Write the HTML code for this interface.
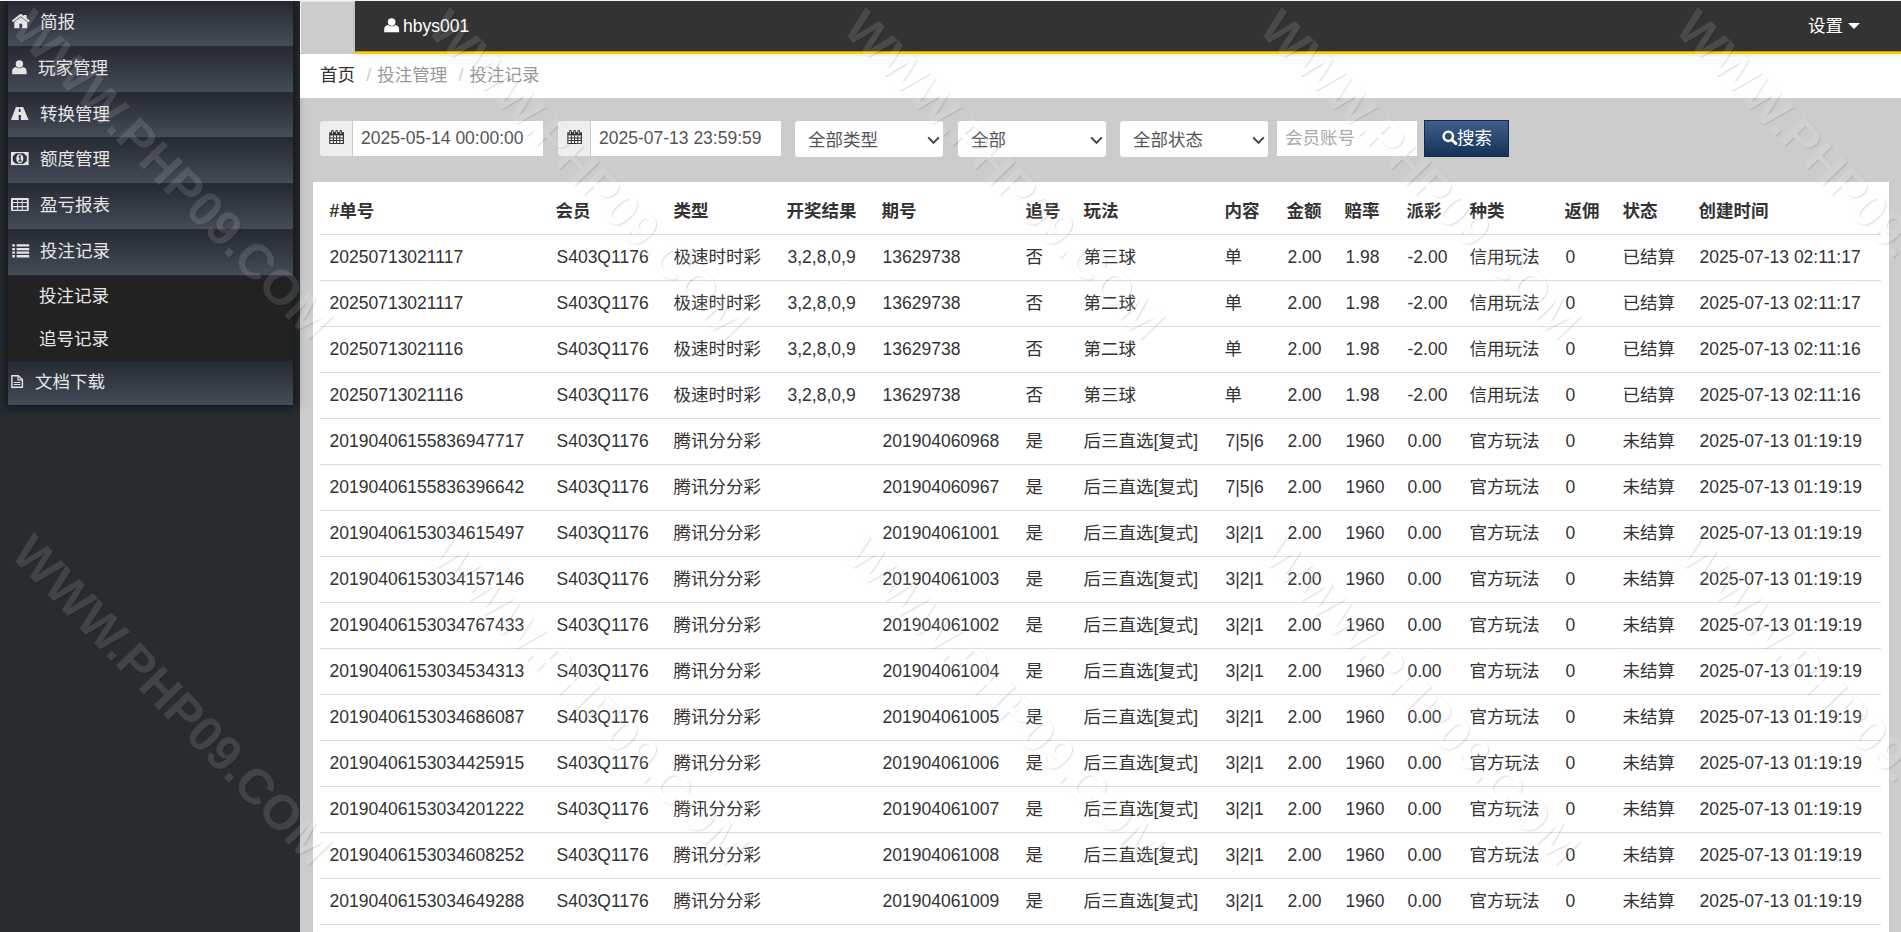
<!DOCTYPE html>
<html lang="zh-CN">
<head>
<meta charset="utf-8">
<title>投注记录</title>
<style>
*{box-sizing:border-box;}
html,body{margin:0;padding:0;}
body{width:1901px;height:932px;overflow:hidden;position:relative;background:#ccc;
  font-family:"Liberation Sans","Noto Sans CJK SC",sans-serif;font-size:17.5px;line-height:25px;color:#333;}
a{color:inherit;text-decoration:none;}
ul{list-style:none;margin:0;padding:0;}
#topline{position:absolute;left:0;top:0;width:1901px;height:1px;background:#f4f4f4;z-index:50;}
/* sidebar */
#side{position:absolute;left:0;top:0;width:300px;height:932px;background:#262c30;}
#menu{position:absolute;left:8px;top:1px;width:285px;box-shadow:0 0 10px 2px rgba(0,0,0,.55);}
#menu li.it{height:46px;border-bottom:1px solid #2b2d2f;background:linear-gradient(#252932,#444c58);color:#e6e6e6;position:relative;}
#menu li.it span{position:absolute;top:9px;line-height:25px;white-space:nowrap;}
#menu li.it svg{position:absolute;}
#menu li.sub{height:85px;background:#222;color:#e6e6e6;position:relative;}
#menu li.sub span{position:absolute;left:31px;line-height:25px;}
/* top bar */
#greybox{position:absolute;left:300px;top:1px;width:55px;height:52px;background:#ccc;border-left:1px solid #f2f2f2;border-top:1px solid #e8e8e8;}
#top{position:absolute;left:355px;top:1px;width:1546px;height:53px;background:#333;border-bottom:2px solid #fc0;color:#fff;z-index:5;box-shadow:0 1px 4px rgba(0,0,0,.12);}
#user{position:absolute;left:48px;top:13px;white-space:nowrap;}
#set{position:absolute;left:1453px;top:13px;white-space:nowrap;}
#caret{position:absolute;left:1493px;top:22px;width:0;height:0;border-left:6px solid transparent;border-right:6px solid transparent;border-top:6px solid #fff;}
#crumb{position:absolute;left:300px;top:54px;width:1601px;height:44px;background:#fff;}
#crumb ol{margin:0;padding:0;list-style:none;position:absolute;left:20px;top:9px;white-space:nowrap;}
#crumb li{display:inline-block;color:#999;}
#crumb li+li:before{content:"/";padding:0 6.25px;color:#ccc;}
#crumb li.h{color:#333;}
/* filter */
.grp{position:absolute;top:120px;height:37px;}
.addon{position:absolute;left:0;top:0;width:33px;height:37px;background:#eee;border:1px solid #ccc;border-right:0;border-radius:4px 0 0 4px;}
.inp{position:absolute;top:0;height:37px;background:#fff;border:1px solid #ccc;padding:0 0 0 8px;line-height:34px;color:#555;white-space:nowrap;}
.sel{position:absolute;top:120px;width:150px;height:38px;background:#fff;border:1px solid #ccc;border-radius:4px;color:#555;line-height:38px;padding-left:13px;}
.sel svg{position:absolute;right:3.5px;top:14.5px;}
#btn{position:absolute;left:1424px;top:120px;width:85px;height:37px;border:1px solid #122b48;background:linear-gradient(#40608a,#12325a);color:#fff;line-height:35px;white-space:nowrap;}
#wm{position:absolute;left:0;top:0;width:1901px;height:932px;overflow:hidden;pointer-events:none;z-index:40;}
#wm span{position:absolute;transform-origin:0 0;transform:rotate(46deg);font:bold 49.1px/1 "Liberation Sans",sans-serif;color:#fff;opacity:.115;white-space:nowrap;text-shadow:1.4px 0 1px #000;}
/* panel */
#panel{position:absolute;left:313px;top:182px;width:1576px;height:760px;background:#fff;}
table{position:absolute;left:6.5px;top:7px;width:1561px;border-collapse:separate;border-spacing:0;table-layout:fixed;}
th,td{height:46px;padding:0 0 0 10px;text-align:left;border-bottom:1px solid #ddd;white-space:nowrap;overflow:visible;font-size:17.5px;line-height:25px;vertical-align:middle;}
th{font-weight:bold;height:46px;}
.c{padding-left:9px;}
</style>
</head>
<body>
<div id="topline"></div>
<div id="side">
<ul id="menu">
<li class="it"><svg style="left:3.5px;top:13px" width="18" height="15" viewBox="0 0 18 15"><path d="M0.4 7.5 L8.7 0.9 L17.2 7.5" fill="none" stroke="#e4e4e4" stroke-width="2.1"/><path d="M11.7 1h2.9v4.2h-2.9z" fill="#e4e4e4"/><path d="M2.3 8 L8.7 3.1 L15.2 8 V14.3 H10.2 V9.8 H7.4 V14.3 H2.3Z" fill="#e4e4e4"/></svg><span style="left:32px">简报</span></li>
<li class="it"><svg style="left:3.5px;top:13px" width="15" height="15" viewBox="0 0 15 15"><circle cx="7.4" cy="4" r="3.7" fill="#e4e4e4"/><path d="M0.2 14.2 V11.2 C0.2 8.4 1.8 7.3 4 6.9 C5 7.9 6.1 8.3 7.4 8.3 C8.7 8.3 9.8 7.9 10.8 6.9 C13 7.3 14.6 8.4 14.6 11.2 V14.2Z" fill="#e4e4e4"/></svg><span style="left:30px">玩家管理</span></li>
<li class="it" style="height:45px"><svg style="left:2.9px;top:14px" width="18" height="14" viewBox="0 0 18 14"><path d="M4.9 0 H12.1 L17.6 13 H0Z" fill="#e4e4e4"/><path d="M8.3 0h0.7v0.7h-0.7zM7.8 1.9h1.8v3.1h-1.8zM7.7 8h2.2v5h-2.2z" fill="#2f3641"/></svg><span style="left:32px">转换管理</span></li>
<li class="it"><svg style="left:2.8px;top:13px" width="18" height="15" viewBox="0 0 18 15"><rect x="0" y="1" width="17.6" height="13.1" fill="#e4e4e4"/><path d="M4.9 2.3H12.5L15.8 5.2V9.9L12.5 12.8H4.9L1.8 9.9V5.2Z" fill="#2b313b"/><ellipse cx="8.8" cy="7.55" rx="3.5" ry="4.4" fill="#e4e4e4"/><path d="M7.6 6 L9.1 4.9 V9.6 M7.4 9.9 H10.6" fill="none" stroke="#2b313b" stroke-width="1.2"/></svg><span style="left:32px">额度管理</span></li>
<li class="it"><svg style="left:2.85px;top:13px" width="18" height="15" viewBox="0 0 18 15"><path fill-rule="evenodd" d="M1 1H16.75Q17.75 1 17.75 2V13.1Q17.75 14.1 16.75 14.1H1Q0 14.1 0 13.1V2Q0 1 1 1ZM1.95 3.06H6.0V4.9H1.95ZM1.95 6.1H6.0V8.9H1.95ZM1.95 10.2H6.0V12.8H1.95ZM6.85 3.06H10.75V4.9H6.85ZM6.85 6.1H10.75V8.9H6.85ZM6.85 10.2H10.75V12.8H6.85ZM11.7 3.06H15.9V4.9H11.7ZM11.7 6.1H15.9V8.9H11.7ZM11.7 10.2H15.9V12.8H11.7Z" fill="#e4e4e4"/></svg><span style="left:32px">盈亏报表</span></li>
<li class="it"><svg style="left:3.5px;top:14px" width="18" height="14" viewBox="0 0 18 14"><path d="M0.3 0.3h2.6v2.3H0.3zM4.6 0.3H17.2v2.3H4.6zM0.3 3.9h2.6v2.3H0.3zM4.6 3.9H17.2v2.3H4.6zM0.3 7.5h2.6v2.3H0.3zM4.6 7.5H17.2v2.3H4.6zM0.3 11.1h2.6v2.3H0.3zM4.6 11.1H17.2v2.3H4.6z" fill="#e4e4e4"/></svg><span style="left:32px">投注记录</span></li>
<li class="sub"><span style="top:8px">投注记录</span><span style="top:51px">追号记录</span></li>
<li class="it" style="height:44px;border-bottom:0"><svg style="left:2.9px;top:14px" width="13" height="13" viewBox="0 0 13 13"><path d="M0.9 0.8 H7.2 L11.4 4.6 V12.2 H0.9Z" fill="none" stroke="#e4e4e4" stroke-width="1.4"/><path d="M7 0.8 V4.8 H11.4" fill="none" stroke="#e4e4e4" stroke-width="1.2"/><path d="M2.8 7.5H9.4M2.8 9.5H9.4" stroke="#e4e4e4" stroke-width="1"/></svg><span style="left:27px">文档下载</span></li>
</ul>
</div>
<div id="greybox"></div>
<div id="top"><svg style="position:absolute;left:29px;top:16.7px" width="15.5" height="15" viewBox="0 0 15 15" preserveAspectRatio="none"><circle cx="7.4" cy="4" r="3.7" fill="#fff"/><path d="M0.2 14.2 V11.2 C0.2 8.4 1.8 7.3 4 6.9 C5 7.9 6.1 8.3 7.4 8.3 C8.7 8.3 9.8 7.9 10.8 6.9 C13 7.3 14.6 8.4 14.6 11.2 V14.2Z" fill="#fff"/></svg><div id="user">hbys001</div><div id="set">设置</div><div id="caret"></div><div style="position:absolute;left:0;bottom:0;width:100%;height:1px;background:#c29e0f"></div></div>
<div id="crumb"><ol><li class="h">首页</li> <li>投注管理</li> <li>投注记录</li></ol></div>

<div class="grp" style="left:319px;width:225px"><div class="addon"><svg style="position:absolute;left:8.6px;top:8.8px" width="15.2" height="14.4" viewBox="0 0 16 16" preserveAspectRatio="none"><path d="M0.9 3.2H15.1V15H0.9Z" fill="#fff" stroke="#333" stroke-width="1.3"/><path d="M0.9 3.2H15.1V6H0.9Z" fill="#333"/><path d="M1 8.9H15M1 11.6H15M4.6 6V15M8 6V15M11.4 6V15" stroke="#333" stroke-width="1.1" fill="none"/><path d="M3.6 1.2V4.6M8 1.2V4.6M12.4 1.2V4.6" stroke="#333" stroke-width="2.6" stroke-linecap="round"/><path d="M3.6 1.8V4M8 1.8V4M12.4 1.8V4" stroke="#eee" stroke-width="0.9" stroke-linecap="round"/></svg></div><div class="inp" style="left:33px;width:192px">2025-05-14 00:00:00</div></div>
<div class="grp" style="left:557px;width:225px"><div class="addon"><svg style="position:absolute;left:8.6px;top:8.8px" width="15.2" height="14.4" viewBox="0 0 16 16" preserveAspectRatio="none"><path d="M0.9 3.2H15.1V15H0.9Z" fill="#fff" stroke="#333" stroke-width="1.3"/><path d="M0.9 3.2H15.1V6H0.9Z" fill="#333"/><path d="M1 8.9H15M1 11.6H15M4.6 6V15M8 6V15M11.4 6V15" stroke="#333" stroke-width="1.1" fill="none"/><path d="M3.6 1.2V4.6M8 1.2V4.6M12.4 1.2V4.6" stroke="#333" stroke-width="2.6" stroke-linecap="round"/><path d="M3.6 1.8V4M8 1.8V4M12.4 1.8V4" stroke="#eee" stroke-width="0.9" stroke-linecap="round"/></svg></div><div class="inp" style="left:33px;width:192px">2025-07-13 23:59:59</div></div>
<div class="sel" style="left:794px">全部类型<svg width="13" height="9" viewBox="0 0 13 9"><path d="M1.2 1.4 L6.5 6.9 L11.8 1.4" fill="none" stroke="#444" stroke-width="2"/></svg></div>
<div class="sel" style="left:957px">全部<svg width="13" height="9" viewBox="0 0 13 9"><path d="M1.2 1.4 L6.5 6.9 L11.8 1.4" fill="none" stroke="#444" stroke-width="2"/></svg></div>
<div class="sel" style="left:1119px">全部状态<svg width="13" height="9" viewBox="0 0 13 9"><path d="M1.2 1.4 L6.5 6.9 L11.8 1.4" fill="none" stroke="#444" stroke-width="2"/></svg></div>
<div class="inp" style="left:1276px;top:120px;width:142px;color:#aaa">会员账号</div>
<div id="btn"><svg style="position:absolute;left:16.5px;top:9.2px" width="16" height="15" viewBox="0 0 16 15"><circle cx="6.3" cy="6.3" r="4.7" fill="none" stroke="#fff" stroke-width="2.4"/><path d="M9.6 9.6 L14 13.6" stroke="#fff" stroke-width="2.8" stroke-linecap="round"/></svg><span style="position:absolute;left:32px;top:0">搜索</span></div>

<div id="panel">
<table id="tb">
<colgroup><col style="width:227px"><col style="width:118px"><col style="width:113px"><col style="width:95px"><col style="width:144px"><col style="width:58px"><col style="width:141px"><col style="width:62px"><col style="width:58px"><col style="width:62px"><col style="width:63px"><col style="width:95px"><col style="width:58px"><col style="width:76px"><col></colgroup>
<thead><tr><th>#单号</th><th class="c">会员</th><th class="c">类型</th><th class="c">开奖结果</th><th class="c">期号</th><th class="c">追号</th><th class="c">玩法</th><th class="c">内容</th><th class="c">金额</th><th class="c">赔率</th><th class="c">派彩</th><th class="c">种类</th><th class="c">返佣</th><th class="c">状态</th><th class="c">创建时间</th></tr></thead>
<tbody id="tbody">
<tr><td>20250713021117</td><td>S403Q1176</td><td class="c">极速时时彩</td><td>3,2,8,0,9</td><td>13629738</td><td class="c">否</td><td class="c">第三球</td><td class="c">单</td><td>2.00</td><td>1.98</td><td>-2.00</td><td class="c">信用玩法</td><td>0</td><td class="c">已结算</td><td>2025-07-13 02:11:17</td></tr>
<tr><td>20250713021117</td><td>S403Q1176</td><td class="c">极速时时彩</td><td>3,2,8,0,9</td><td>13629738</td><td class="c">否</td><td class="c">第二球</td><td class="c">单</td><td>2.00</td><td>1.98</td><td>-2.00</td><td class="c">信用玩法</td><td>0</td><td class="c">已结算</td><td>2025-07-13 02:11:17</td></tr>
<tr><td>20250713021116</td><td>S403Q1176</td><td class="c">极速时时彩</td><td>3,2,8,0,9</td><td>13629738</td><td class="c">否</td><td class="c">第二球</td><td class="c">单</td><td>2.00</td><td>1.98</td><td>-2.00</td><td class="c">信用玩法</td><td>0</td><td class="c">已结算</td><td>2025-07-13 02:11:16</td></tr>
<tr><td>20250713021116</td><td>S403Q1176</td><td class="c">极速时时彩</td><td>3,2,8,0,9</td><td>13629738</td><td class="c">否</td><td class="c">第三球</td><td class="c">单</td><td>2.00</td><td>1.98</td><td>-2.00</td><td class="c">信用玩法</td><td>0</td><td class="c">已结算</td><td>2025-07-13 02:11:16</td></tr>
<tr><td>20190406155836947717</td><td>S403Q1176</td><td class="c">腾讯分分彩</td><td></td><td>201904060968</td><td class="c">是</td><td class="c">后三直选[复式]</td><td>7|5|6</td><td>2.00</td><td>1960</td><td>0.00</td><td class="c">官方玩法</td><td>0</td><td class="c">未结算</td><td>2025-07-13 01:19:19</td></tr>
<tr><td>20190406155836396642</td><td>S403Q1176</td><td class="c">腾讯分分彩</td><td></td><td>201904060967</td><td class="c">是</td><td class="c">后三直选[复式]</td><td>7|5|6</td><td>2.00</td><td>1960</td><td>0.00</td><td class="c">官方玩法</td><td>0</td><td class="c">未结算</td><td>2025-07-13 01:19:19</td></tr>
<tr><td>20190406153034615497</td><td>S403Q1176</td><td class="c">腾讯分分彩</td><td></td><td>201904061001</td><td class="c">是</td><td class="c">后三直选[复式]</td><td>3|2|1</td><td>2.00</td><td>1960</td><td>0.00</td><td class="c">官方玩法</td><td>0</td><td class="c">未结算</td><td>2025-07-13 01:19:19</td></tr>
<tr><td>20190406153034157146</td><td>S403Q1176</td><td class="c">腾讯分分彩</td><td></td><td>201904061003</td><td class="c">是</td><td class="c">后三直选[复式]</td><td>3|2|1</td><td>2.00</td><td>1960</td><td>0.00</td><td class="c">官方玩法</td><td>0</td><td class="c">未结算</td><td>2025-07-13 01:19:19</td></tr>
<tr><td>20190406153034767433</td><td>S403Q1176</td><td class="c">腾讯分分彩</td><td></td><td>201904061002</td><td class="c">是</td><td class="c">后三直选[复式]</td><td>3|2|1</td><td>2.00</td><td>1960</td><td>0.00</td><td class="c">官方玩法</td><td>0</td><td class="c">未结算</td><td>2025-07-13 01:19:19</td></tr>
<tr><td>20190406153034534313</td><td>S403Q1176</td><td class="c">腾讯分分彩</td><td></td><td>201904061004</td><td class="c">是</td><td class="c">后三直选[复式]</td><td>3|2|1</td><td>2.00</td><td>1960</td><td>0.00</td><td class="c">官方玩法</td><td>0</td><td class="c">未结算</td><td>2025-07-13 01:19:19</td></tr>
<tr><td>20190406153034686087</td><td>S403Q1176</td><td class="c">腾讯分分彩</td><td></td><td>201904061005</td><td class="c">是</td><td class="c">后三直选[复式]</td><td>3|2|1</td><td>2.00</td><td>1960</td><td>0.00</td><td class="c">官方玩法</td><td>0</td><td class="c">未结算</td><td>2025-07-13 01:19:19</td></tr>
<tr><td>20190406153034425915</td><td>S403Q1176</td><td class="c">腾讯分分彩</td><td></td><td>201904061006</td><td class="c">是</td><td class="c">后三直选[复式]</td><td>3|2|1</td><td>2.00</td><td>1960</td><td>0.00</td><td class="c">官方玩法</td><td>0</td><td class="c">未结算</td><td>2025-07-13 01:19:19</td></tr>
<tr><td>20190406153034201222</td><td>S403Q1176</td><td class="c">腾讯分分彩</td><td></td><td>201904061007</td><td class="c">是</td><td class="c">后三直选[复式]</td><td>3|2|1</td><td>2.00</td><td>1960</td><td>0.00</td><td class="c">官方玩法</td><td>0</td><td class="c">未结算</td><td>2025-07-13 01:19:19</td></tr>
<tr><td>20190406153034608252</td><td>S403Q1176</td><td class="c">腾讯分分彩</td><td></td><td>201904061008</td><td class="c">是</td><td class="c">后三直选[复式]</td><td>3|2|1</td><td>2.00</td><td>1960</td><td>0.00</td><td class="c">官方玩法</td><td>0</td><td class="c">未结算</td><td>2025-07-13 01:19:19</td></tr>
<tr><td>20190406153034649288</td><td>S403Q1176</td><td class="c">腾讯分分彩</td><td></td><td>201904061009</td><td class="c">是</td><td class="c">后三直选[复式]</td><td>3|2|1</td><td>2.00</td><td>1960</td><td>0.00</td><td class="c">官方玩法</td><td>0</td><td class="c">未结算</td><td>2025-07-13 01:19:19</td></tr>
</tbody>
</table>
</div>
<div id="wm"><span style="left:39.15px;top:1.70px">WWW.PHP09.COM</span><span style="left:455.18px;top:1.70px">WWW.PHP09.COM</span><span style="left:871.21px;top:1.70px">WWW.PHP09.COM</span><span style="left:1287.24px;top:1.70px">WWW.PHP09.COM</span><span style="left:1703.27px;top:1.70px">WWW.PHP09.COM</span><span style="left:39.15px;top:527.46px">WWW.PHP09.COM</span><span style="left:455.18px;top:527.46px">WWW.PHP09.COM</span><span style="left:871.21px;top:527.46px">WWW.PHP09.COM</span><span style="left:1287.24px;top:527.46px">WWW.PHP09.COM</span><span style="left:1703.27px;top:527.46px">WWW.PHP09.COM</span></div>
</body>
</html>
